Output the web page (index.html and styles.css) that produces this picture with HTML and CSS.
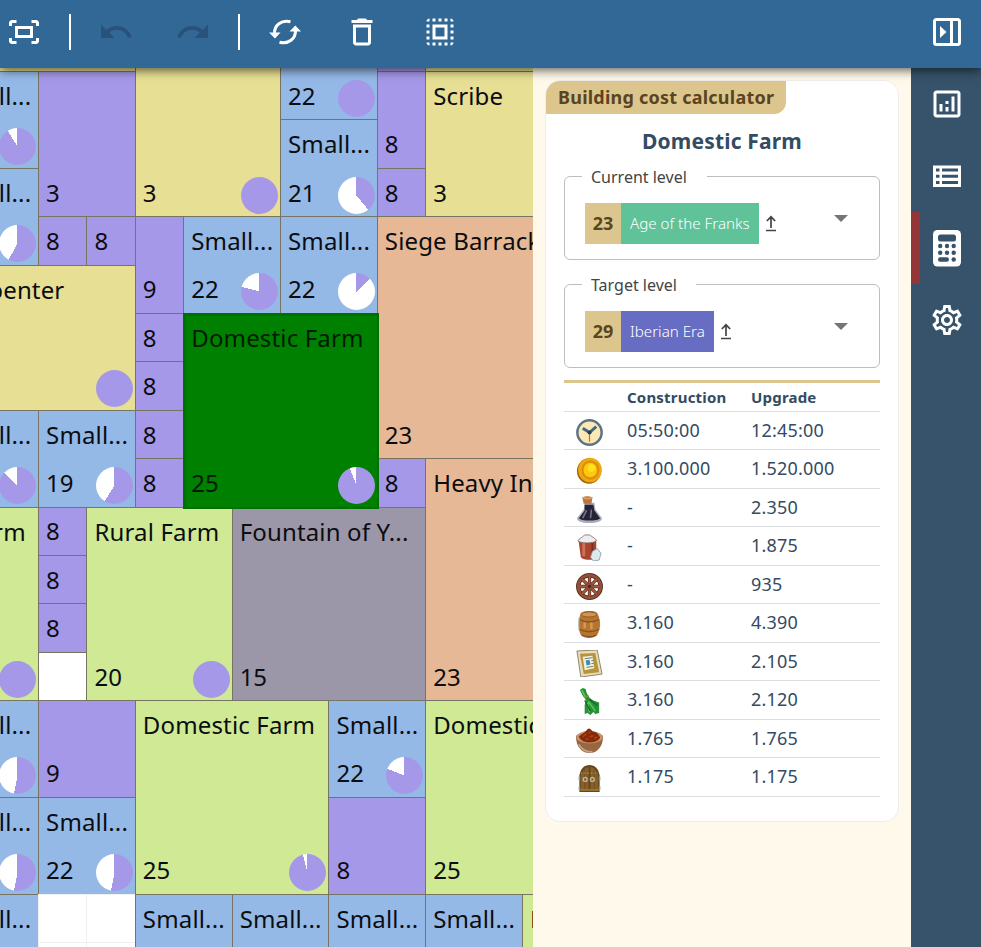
FILE: index.html
```html
<!DOCTYPE html>
<html lang="en">
<head>
<meta charset="utf-8">
<title>City planner</title>
<link rel="stylesheet" href="styles.css">
</head>
<body>
<div class="app">
  <header class="toolbar">
    <button class="tool"><svg width="36" height="36" viewBox="0 0 24 24"><path d="M17 4h3c1.1 0 2 .9 2 2v2h-2V6h-3V4zM4 8V6h3V4H4c-1.100 0-2 .9-2 2v2h2zm16 8v2h-3v2h3c1.100 0 2-.9 2-2v-2h-2zM7 18H4v-2H2v2c0 1.100.9 2 2 2h3v-2zM18 8H6v8h12V8zm-2 6H8v-4h8v4z"/></svg></button>
    <span class="divider"></span>
    <button class="tool disabled"><svg width="36" height="36" viewBox="0 0 24 24"><path d="M12.500 8c-2.650 0-5.050.99-6.900 2.600L2 7v9h9l-3.620-3.620c1.390-1.160 3.160-1.880 5.120-1.880 3.540 0 6.550 2.310 7.600 5.500l2.370-.78C21.080 11.030 17.150 8 12.500 8z"/></svg></button>
    <button class="tool disabled redo"><svg width="36" height="36" viewBox="0 0 24 24"><path d="M18.400 10.600C16.550 8.990 14.150 8 11.500 8c-4.650 0-8.580 3.030-9.960 7.220L3.900 16c1.050-3.190 4.050-5.500 7.600-5.500 1.950 0 3.730.72 5.120 1.880L13 16h9V7l-3.600 3.600z"/></svg></button>
    <span class="divider"></span>
    <button class="tool cycle"><svg width="36" height="36" viewBox="0 0 36 36"><g fill="none" stroke="#fff" stroke-width="3"><path d="M7.500 19C7.500 11.500 14 5.500 23.500 7.800"/><path d="M28.500 17C28.500 24.500 22 30.500 12.500 28.200"/></g><path d="M2 18.500h11.500L8 24.500zM34 17.500H22.500L28.300 11.500z"/></svg></button>
    <button class="tool trash"><svg width="36" height="36" viewBox="0 0 24 24"><path d="M6 19c0 1.100.9 2 2 2h8c1.100 0 2-.9 2-2V7H6v12zM8 9h8v10H8V9zm7.500-5l-1-1h-5l-1 1H5v2h14V4z"/></svg></button>
    <button class="tool select"><svg width="36" height="36" viewBox="0 0 24 24"><path d="M3 5h2V3c-1.100 0-2 .9-2 2zm0 8h2v-2H3v2zm4 8h2v-2H7v2zM3 9h2V7H3v2zm10-6h-2v2h2V3zm6 0v2h2c0-1.100-.9-2-2-2zM5 21v-2H3c0 1.100.9 2 2 2zm-2-4h2v-2H3v2zM9 3H7v2h2V3zm2 18h2v-2h-2v2zm8-8h2v-2h-2v2zm0 8c1.100 0 2-.9 2-2h-2v2zm0-12h2V7h-2v2zm0 8h2v-2h-2v2zm-4 4h2v-2h-2v2zm0-16h2V3h-2v2zM7 17h10V7H7v10zm2-8h6v6H9V9z"/></svg></button>
    <button class="tool collapse"><svg width="36" height="36" viewBox="0 0 36 36"><path fill-rule="evenodd" d="M7.500 4h21a3.500 3.500 0 0 1 3.500 3.500v21a3.500 3.500 0 0 1-3.500 3.500h-21A3.500 3.500 0 0 1 4 28.500v-21A3.500 3.500 0 0 1 7.500 4zM7 7v22h14V7zM24 7v22h5V7z"/><path d="M11 12v12l6.500-6z"/></svg></button>
  </header>

  <div class="body">
    <main class="map"><div class="grid" id="grid"></div></main>

    <section class="panel">
      <article class="card">
        <h2 class="tag">Building cost calculator</h2>
        <h3 class="building">Domestic Farm</h3>

        <fieldset class="field current">
          <legend>Current level</legend>
          <span class="lvl">23</span><span class="age franks">Age of the Franks</span>
          <svg class="up" width="12" height="17" viewBox="0 0 12 17"><path d="M6 13V2M1.800 6L6 1.800 10.200 6M1 15.500h10"/></svg>
          <span class="caret"></span>
        </fieldset>
        <fieldset class="field target">
          <legend>Target level</legend>
          <span class="lvl">29</span><span class="age iberian">Iberian Era</span>
          <svg class="up" width="12" height="17" viewBox="0 0 12 17"><path d="M6 13V2M1.800 6L6 1.800 10.200 6M1 15.500h10"/></svg>
          <span class="caret"></span>
        </fieldset>

        <div class="costs">
          <div class="row head"><span></span><span>Construction</span><span>Upgrade</span></div>
          <div class="row"><svg class="res" viewBox="0 0 28 28"><circle cx="14" cy="14" r="12.600" fill="#fbe8b4" stroke="#5d7486" stroke-width="2.600"/><path d="M14 14v9.500" stroke="#d8612c" stroke-width="1.200"/><path d="M7 9.500l7 4.500 7-6" fill="none" stroke="#42677f" stroke-width="3"/><circle cx="14" cy="14" r="2.100" fill="#243f52"/></svg><span>05:50:00</span><span>12:45:00</span></div>
          <div class="row"><svg class="res" viewBox="0 0 28 28"><ellipse cx="13.500" cy="14.500" rx="12.500" ry="13.300" fill="#a85f06"/><ellipse cx="14.500" cy="13.500" rx="12.300" ry="12.800" fill="#eba811"/><ellipse cx="15" cy="13.500" rx="9.300" ry="10" fill="#dd8d08"/><ellipse cx="14.800" cy="13.500" rx="7" ry="7.600" fill="#ffc810"/><ellipse cx="16" cy="11.500" rx="4" ry="4" fill="#ffe11f"/></svg><span>3.100.000</span><span>1.520.000</span></div>
          <div class="row"><svg class="res" viewBox="0 0 28 28"><path d="M9 7h10l1 7 7 9c0 3-5 5-13 5S1 26 1 23l7-9z" fill="#a9a9b8"/><path d="M9 9h9l1 6 6 8c-2 3-19 3.500-22 0l6-8z" fill="#242436"/><path d="M11 15l-4 8M16 14l-1 9" stroke="#77778f" stroke-width="1.600"/><path d="M6.500 1.500c3-1.500 7.500-1.500 10.500 0L16 8H8z" fill="#bb743c"/><path d="M7 1.500c3 1.500 7 1.500 10 0" stroke="#e1a36b" stroke-width="1.500" fill="none"/></svg><span>-</span><span>2.350</span></div>
          <div class="row"><svg class="res" viewBox="0 0 28 28"><path d="M2.500 6h18.500v19c-3 3-14 2-16-1z" fill="#a94430"/><path d="M8 9v14" stroke="#cf7159" stroke-width="3"/><path d="M17 9v14" stroke="#7e2f24" stroke-width="2"/><path d="M2 7c1-2 4-3 7-6h5c3 2 7 4 7 6-3 3-16 3-19 0z" fill="#e9eff1" stroke="#8a5b50" stroke-width=".8"/><path d="M17 18l5-3 4 5-2 7-6 1-3-4z" fill="#dce9ed" stroke="#7b979e" stroke-width=".8"/></svg><span>-</span><span>1.875</span></div>
          <div class="row"><svg class="res" viewBox="0 0 28 28"><circle cx="14" cy="14" r="11.700" fill="#fff" stroke="#5e3024" stroke-width="4.600"/><circle cx="14" cy="14" r="11.700" fill="none" stroke="#985138" stroke-width="2.600"/><path d="M14 3v22M3 14h22M6 6l16 16M22 6L6 22" stroke="#5e3024" stroke-width="3.400"/><path d="M14 3v22M3 14h22M6 6l16 16M22 6L6 22" stroke="#a35c3e" stroke-width="1.900"/><circle cx="14" cy="14" r="4" fill="#8d4a32"/><circle cx="14" cy="14" r="1.500" fill="#41241d"/></svg><span>-</span><span>935</span></div>
          <div class="row"><svg class="res" viewBox="0 0 28 28"><path d="M5 2c5-3 13-3 17 0 4 8 4 15 0 23-4 4-13 4-17 0C2 18 2 10 5 2z" fill="#b87532"/><path d="M3.500 9c6 3 14 3 20.500 0M3.500 19c6 3 14 3 20.500 0M6 25c5 2 11 2 15 0" fill="none" stroke="#85551f" stroke-width="1.500"/><ellipse cx="13.500" cy="3.600" rx="8" ry="2.600" fill="#d09550" stroke="#85551f" stroke-width=".8"/><path d="M9 12v6M16 12v7" stroke="#d99a50" stroke-width="2.500"/><path d="M3.300 7v13" stroke="#8b9fa0" stroke-width="1.300"/></svg><span>3.160</span><span>4.390</span></div>
          <div class="row"><svg class="res" viewBox="0 0 28 28"><path d="M1 1l21-1 5 25-22 3z" fill="#e7dcc2" stroke="#8e8265" stroke-width="1"/><path d="M4 4l16-1 4 20-16 2z" fill="#b79537"/><path d="M7 7l10-1 2 13-10 2z" fill="#f4efdf"/><path d="M10 11l4-1 1 5-4 1z" fill="#3a8db4"/><path d="M9 9l8-1M16 11l2-.2M16 14l2.500-.2M11 18l7-1" stroke="#6b7980" stroke-width="1"/></svg><span>3.160</span><span>2.105</span></div>
          <div class="row"><svg class="res" viewBox="0 0 28 28"><path d="M4 2l3-2 3 1 1 4 3 5 4 3 6 2v11l-4 1-2-2-3 3-3-2-3 1v-9l1-6-3-4z" fill="#27913a"/><path d="M6 2l4 8M13 14l7 10M12 15l2 10" stroke="#56c952" stroke-width="1.600"/><path d="M9 13l6 11M14 12l8 6" stroke="#126329" stroke-width="1.200"/><path d="M9 10l4-2" stroke="#9b7d45" stroke-width="1.600"/></svg><span>3.160</span><span>2.120</span></div>
          <div class="row"><svg class="res" viewBox="0 0 28 28"><path d="M0 10c1-6 27-6 28 0 0 10-6 17-14 17S0 20 0 10z" fill="#99663f"/><path d="M3 18c3 6 8 8 14 8" stroke="#b9a48c" stroke-width="2" fill="none"/><ellipse cx="14" cy="10.500" rx="13.500" ry="6.500" fill="#c3946c"/><path d="M3 10c2-3 6-3 9-8 3-2 4 2 6 3 3 0 6 3 7 6-3 7-19 7-22-1z" fill="#852a0c"/><path d="M7 10l4-3M13 5l2 1M14 10l4-1M10 13l3-1M19 12l3-2" stroke="#b04412" stroke-width="1.600"/></svg><span>1.765</span><span>1.765</span></div>
          <div class="row"><svg class="res" viewBox="0 0 28 28"><path d="M3.500 28V11c1-7 5-11 10.500-11s9.500 4 10.500 11v17z" fill="#664719"/><path d="M5 26V12c1-6 4-9 8-10v24zM15 26V2c4 1 7 4 8 10v14z" fill="#86602a"/><path d="M9 5v20M19 5v20" stroke="#75501e" stroke-width="1"/><path d="M5 8.500h18" stroke="#9d9072" stroke-width="1.200" stroke-dasharray="1.500 2"/><g fill="none" stroke="#bdb29c" stroke-width="1.500"><circle cx="9.500" cy="15" r="2"/><circle cx="17" cy="15" r="2"/></g><path d="M3.500 12v4M3.500 22v4M24.500 12v4M24.500 22v4" stroke="#8ea3a6" stroke-width="1.600"/><path d="M4 26h20" stroke="#a97a35" stroke-width="1.600"/></svg><span>1.175</span><span>1.175</span></div>
        </div>
      </article>
    </section>

    <nav class="rail">
      <button class="tab"><svg width="36" height="36" viewBox="0 0 24 24"><path d="M19 3H5c-1.100 0-2 .9-2 2v14c0 1.100.9 2 2 2h14c1.100 0 2-.9 2-2V5c0-1.100-.9-2-2-2zm0 16H5V5h14v14zM7 12h2v5H7zM15 7h2v10h-2zM11 14h2v3h-2zM11 10h2v2h-2z"/></svg></button>
      <button class="tab"><svg width="36" height="36" viewBox="0 0 36 36"><path fill-rule="evenodd" d="M4 7.500h28v21.500H4zM7 10.500v3h3.500v-3zm6 0v3h16v-3zM7 16.800v3h3.500v-3zm6 0v3h16v-3zM7 23v3h3.500v-3zm6 0v3h16v-3z"/></svg></button>
      <button class="tab active"><svg width="36" height="38" viewBox="0 0 36 38"><rect x="4" y="1" width="28" height="36.500" rx="4.500"/><g fill="#36536b"><rect x="9" y="5.500" width="18" height="7" rx="2.500"/><circle cx="11.200" cy="17" r="2.200"/><circle cx="18" cy="17" r="2.200"/><circle cx="24.700" cy="17" r="2.200"/><circle cx="11.200" cy="23.700" r="2.200"/><circle cx="18" cy="23.700" r="2.200"/><circle cx="24.700" cy="23.700" r="2.200"/><rect x="9" y="28.300" width="11" height="4.400" rx="2.200"/><circle cx="24.700" cy="30.500" r="2.200"/></g></svg></button>
      <button class="tab"><svg width="36" height="36" viewBox="0 0 24 24"><path d="M19.430 12.980c.04-.32.070-.64.070-.98s-.03-.66-.07-.98l2.110-1.650c.19-.15.240-.42.120-.64l-2-3.460c-.09-.16-.26-.25-.44-.25-.06 0-.12.010-.17.030l-2.490 1c-.52-.4-1.080-.73-1.690-.98l-.38-2.650C14.460 2.180 14.250 2 14 2h-4c-.25 0-.46.18-.49.42l-.38 2.650c-.61.250-1.170.59-1.690.98l-2.490-1c-.06-.02-.12-.03-.18-.03-.17 0-.34.090-.43.250l-2 3.460c-.13.220-.07.490.12.640l2.110 1.650c-.04.320-.07.650-.07.980s.03.660.07.980l-2.110 1.650c-.19.150-.24.420-.12.640l2 3.460c.09.160.26.250.44.250.06 0 .12-.01.170-.03l2.490-1c.52.400 1.080.73 1.690.98l.38 2.650c.03.240.24.420.49.420h4c.25 0 .46-.18.490-.42l.38-2.650c.61-.25 1.170-.59 1.690-.98l2.490 1c.06.020.12.030.18.030.17 0 .34-.09.430-.25l2-3.460c.12-.22.070-.49-.12-.64l-2.110-1.650zm-1.980-1.710c.04.310.05.520.05.730 0 .21-.02.430-.05.730l-.14 1.130.89.700 1.080.84-.7 1.210-1.270-.51-1.040-.42-.9.680c-.43.320-.84.560-1.250.73l-1.060.43-.16 1.130-.2 1.350h-1.400l-.19-1.350-.16-1.130-1.060-.43c-.43-.18-.83-.41-1.230-.71l-.91-.7-1.060.43-1.270.51-.7-1.210 1.080-.84.89-.7-.14-1.130c-.03-.31-.05-.54-.05-.74s.02-.43.050-.73l.14-1.130-.89-.7-1.080-.84.7-1.210 1.270.51 1.040.42.900-.68c.43-.32.840-.56 1.250-.73l1.060-.43.160-1.130.2-1.350h1.390l.19 1.350.16 1.130 1.060.43c.43.180.83.410 1.230.71l.91.700 1.060-.43 1.270-.51.700 1.210-1.070.85-.89.700.14 1.130zM12 8c-2.210 0-4 1.790-4 4s1.790 4 4 4 4-1.790 4-4-1.790-4-4-4zm0 6c-1.100 0-2-.9-2-2s.9-2 2-2 2 .9 2 2-.9 2-2 2z"/></svg></button>
    </nav>
  </div>
</div>
<script src="map.js"></script>
</body>
</html>
```
FILE: map.js
```js
// kind, column start/end, row start/end, name, level, happiness share (percent)
const buildings = [
  ["shop", 2, 6, 1, 2],
  ["home", 2, 4, 2, 4, "Small...", "", 91],
  ["home", 2, 4, 4, 6, "Small...", "", 58],
  ["deco", 4, 6, 2, 5, "", "3"],
  ["deco", 4, 5, 5, 6, "", "8"],
  ["deco", 5, 6, 5, 6, "", "8"],
  ["shop", 6, 9, 1, 5, "", "3", 100],
  ["home", 9, 11, 1, 3, "", "22", 100],
  ["home", 9, 11, 3, 5, "Small...", "21", 39],
  ["deco", 11, 12, 1, 2],
  ["deco", 11, 12, 2, 4, "", "8"],
  ["deco", 11, 12, 4, 5, "", "8"],
  ["shop", 12, 16, 1, 2],
  ["shop", 12, 16, 2, 5, "Scribe", "3"],
  ["deco", 6, 7, 5, 7, "", "9"],
  ["deco", 6, 7, 7, 8, "", "8"],
  ["deco", 6, 7, 8, 9, "", "8"],
  ["deco", 6, 7, 9, 10, "", "8"],
  ["deco", 6, 7, 10, 11, "", "8"],
  ["home", 7, 9, 5, 7, "Small...", "22", 79],
  ["home", 9, 11, 5, 7, "Small...", "22", 12.5],
  ["army", 11, 16, 5, 10, "Siege Barracks", "23"],
  ["shop", 2, 6, 6, 9, "Carpenter", "", 100],
  ["home", 2, 4, 9, 11, "Small...", "", 87.5],
  ["home", 4, 6, 9, 11, "Small...", "19", 59],
  ["deco", 11, 12, 10, 11, "", "8"],
  ["army", 12, 16, 10, 15, "Heavy Infantry", "23"],
  ["farm", 1, 4, 11, 15, "Rural Farm", "", 100],
  ["deco", 4, 5, 11, 12, "", "8"],
  ["deco", 4, 5, 12, 13, "", "8"],
  ["deco", 4, 5, 13, 14, "", "8"],
  ["empty", 4, 5, 14, 15],
  ["farm", 5, 8, 11, 15, "Rural Farm", "20", 100],
  ["culture", 8, 12, 11, 15, "Fountain of Y...", "15"],
  ["home", 2, 4, 15, 17, "Small...", "", 53],
  ["deco", 4, 6, 15, 17, "", "9"],
  ["farm", 6, 10, 15, 19, "Domestic Farm", "25", 96],
  ["home", 10, 12, 15, 17, "Small...", "22", 81],
  ["deco", 10, 12, 17, 19, "", "8"],
  ["farm", 12, 16, 15, 19, "Domestic Farm", "25"],
  ["home", 2, 4, 17, 19, "Small...", "", 53],
  ["home", 4, 6, 17, 19, "Small...", "22", 53],
  ["home", 2, 4, 19, 21, "Small..."],
  ["free", 4, 5, 19, 20],
  ["free", 5, 6, 19, 20],
  ["free", 4, 5, 20, 21],
  ["free", 5, 6, 20, 21],
  ["home", 6, 8, 19, 21, "Small..."],
  ["home", 8, 10, 19, 21, "Small..."],
  ["home", 10, 12, 19, 21, "Small..."],
  ["home", 12, 14, 19, 21, "Small..."],
  ["farm", 14, 16, 19, 21, "Domestic Farm"],
  ["selected", 7, 11, 7, 11, "Domestic Farm", "25", 94]
];

function add(parent, className, text) {
  const el = document.createElement("span");
  el.className = className;
  if (text) el.textContent = text;
  parent.append(el);
  return el;
}

const grid = document.getElementById("grid");
for (const [kind, c1, c2, r1, r2, name, level, share] of buildings) {
  const cell = document.createElement("div");
  cell.className = "cell " + kind;
  cell.style.gridArea = `${r1} / ${c1} / ${r2} / ${c2}`;
  if (name) add(cell, "name", name);
  if (level || share) {
    const foot = add(cell, "foot");
    add(foot, "level", level);
    if (share) add(foot, "pie", "").style.setProperty("--share", share + "%");
  }
  grid.append(cell);
}
```
FILE: styles.css
```css
* { box-sizing: border-box; }
body { margin: 0; font-family: "Noto Sans", sans-serif; color: #334b63; }
button { border: 0; padding: 0; background: none; display: flex; align-items: center; justify-content: center; }
svg { display: block; fill: #fff; }
.app { height: 947px; display: flex; flex-direction: column; overflow: hidden; }

.toolbar { height: 68px; flex: none; display: flex; align-items: center; padding: 0 16px 4px 6px; background: #326896; box-shadow: 0 2px 10px rgba(0, 0, 0, .65); position: relative; z-index: 2; }
.tool { width: 36px; height: 36px; }
.divider { width: 2px; height: 36px; background: #fff; margin: 0 27px; }
.disabled svg { fill: #28527a; }
.redo { margin-left: 41px; }
.trash { margin-left: 41px; }
.select { margin-left: 42px; }
.collapse { margin-left: auto; }

.body { flex: 1; display: flex; min-height: 0; }
.map { width: 533px; flex: none; overflow: hidden; background: #fff; }
.grid { display: grid; grid-template-columns: repeat(15, 48.4px); grid-template-rows: repeat(20, 48.4px); margin: -45.4px 0 0 -107.1px; width: 726px; }
.cell { display: flex; flex-direction: column; min-width: 0; min-height: 0; padding: 6px 2px 2.500px 7px; border: solid #777561; border-width: 1px 0 0 1px; font-size: 24px; line-height: 35px; color: #0b0d10; white-space: nowrap; }
.name { height: 35px; letter-spacing: .15px; }
.foot { margin-top: auto; display: flex; justify-content: space-between; align-items: flex-end; height: 37px; }
.level { line-height: 32px; height: 37px; }
.pie { width: 37px; height: 37px; border-radius: 50%; background: conic-gradient(#a698e8 var(--share), #fff 0); }
.home { background: #95b9e7; }
.deco { background: #a698e8; }
.shop { background: #e7df94; }
.army { background: #e6b895; }
.farm { background: #cfe994; }
.culture { background: #9b96a8; }
.empty { background: #fff; }
.free { background: #fff; border-color: #f0f0f0; }
.cell.free:not(.home) { border-top-color: #f0f0f0; }
.selected { background: #008000; box-shadow: inset 1px 1px 0 1px #007000, 1px 1px 0 1px #007000; border-color: #007000; color: #001c00; position: relative; }

.panel { width: 378px; flex: none; background: #fff9eb; padding: 12px 12px 0 12px; }
.card { height: 742px; width: 354px; background: #fff; border: 1px solid #f0eeec; border-radius: 15px; padding: 0 18px; overflow: hidden; }
.tag { margin: 0 0 0 -18px; width: 240px; height: 33px; padding-left: 12px; background: #dcc68e; color: #5b4420; font-size: 18px; line-height: 33px; font-weight: 700; letter-spacing: .23px; border-bottom-right-radius: 12px; white-space: nowrap; }
.building { margin: 11px 0 0; font-size: 21px; line-height: 32px; text-align: center; letter-spacing: .18px; color: #334b63; }
.field { margin: 8px 0 0; padding: 2px 0 0 20px; width: 316px; height: 94.5px; border: 1px solid #bdbdbd; border-radius: 6px; display: flex; align-items: center; }
.field legend { margin-left: -3px; padding: 0 0 0 9px; height: 22px; line-height: 24px; font-size: 16px; color: #444; }
.current legend { width: 125px; }
.target legend { width: 114px; }
.target { margin-top: 13.5px; }
.lvl { width: 36px; height: 41px; line-height: 40px; background: #dcc68e; color: #5b4420; font-size: 18px; font-weight: 700; text-align: center; }
.age { height: 41px; line-height: 40px; padding: 0 9px; color: #fff; font-size: 15.15px; font-weight: 300; white-space: nowrap; }
.franks { background: #5fc299; }
.iberian { background: #676dc2; }
.up { margin-left: 6px; fill: none; stroke: #444; stroke-width: 1.7; }
.caret { margin: -10px 31px 0 auto; border: solid transparent; border-width: 7px 7px 0; border-top-color: #757575; }

.costs { margin-top: 12px; border-top: 3px solid #dcc68e; }
.row { display: grid; grid-template-columns: 63px 124px 1fr; height: 38.5px; border-bottom: 1px solid #dcdee3; font-size: 18px; line-height: 37px; letter-spacing: .2px; }
.head { height: 29px; font-size: 15px; line-height: 28px; font-weight: 700; }
.res { width: 27px; height: 27px; margin: 7px 0 0 12px; }

.rail { width: 70px; flex: none; background: #36536b; }
.tab { width: 70px; height: 72px; padding-left: 2px; }
.active { position: relative; padding-bottom: 1px; }
.active::before { content: ""; position: absolute; left: 0; top: 0; width: 9px; height: 72px; background: #943636; }
```
